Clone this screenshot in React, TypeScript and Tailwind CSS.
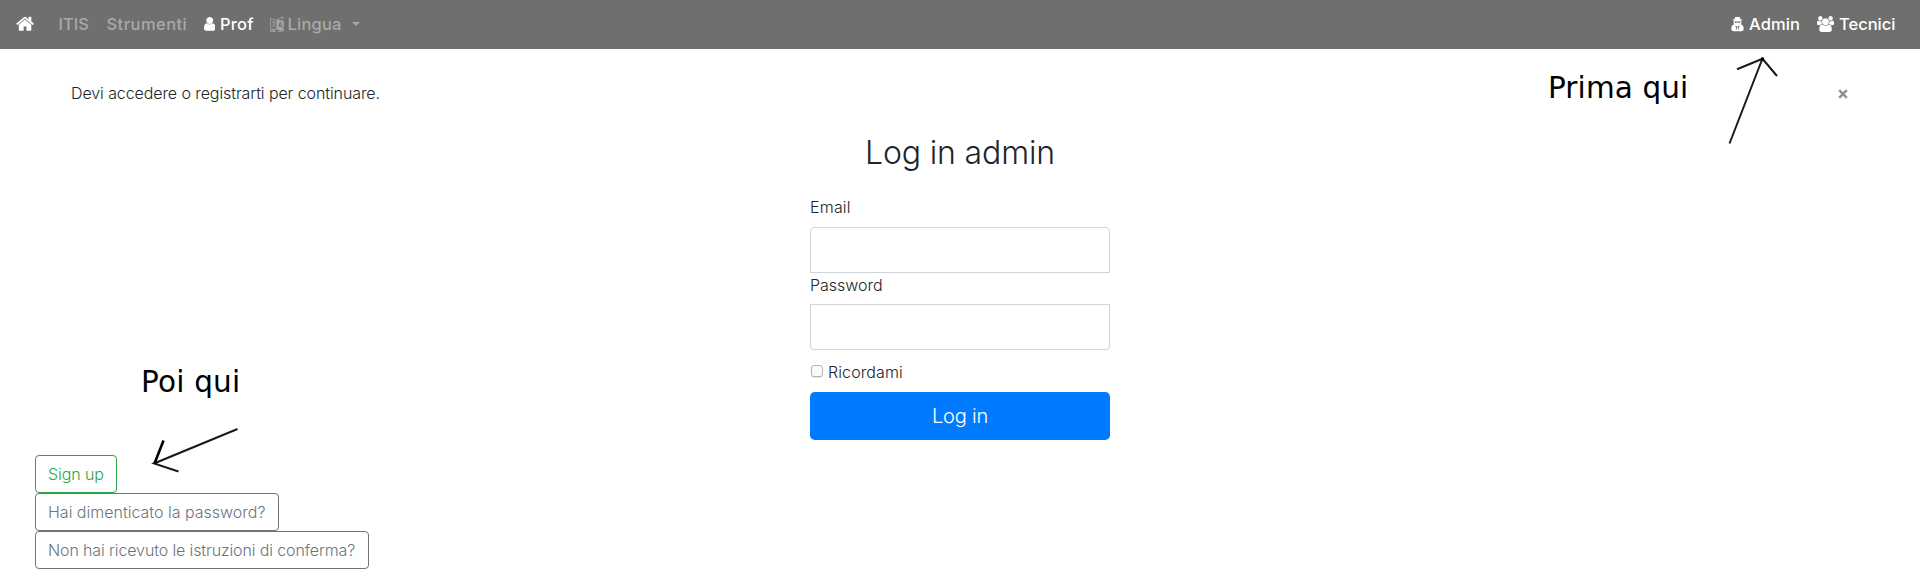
import type { ReactNode } from "react";

const HOME =
  "M1408 992v480q0 26-19 45t-45 19h-384v-384h-256v384h-384q-26 0-45-19t-19-45v-480q0-1 .5-3t.5-3l575-474 575 474q1 2 1 6zm223-69l-62 74q-8 9-21 11h-3q-13 0-21-7l-692-577-692 577q-12 8-24 7-13-2-21-11l-62-74q-8-10-7-23.5t11-21.5l719-599q32-26 76-26t76 26l244 204v-195q0-14 9-23t23-9h192q14 0 23 9t9 23v408l219 182q10 8 11 21.5t-7 23.5z";
const USER =
  "M1536 1399q0 109-62.5 187t-150.5 78h-854q-88 0-150.5-78t-62.5-187q0-85 8.5-160.5t31.5-152 58.5-131 94-89 134.5-34.5q131 128 313 128t313-128q76 0 134.5 34.5t94 89 58.5 131 31.5 152 8.5 160.5zm-256-887q0 159-112.5 271.5t-271.5 112.5-271.5-112.5-112.5-271.5 112.5-271.5 271.5-112.5 271.5 112.5 112.5 271.5z";
const GROUP =
  "M593 896q-162 5-265 128h-134q-82 0-138-40.5t-56-118.5q0-353 124-353 6 0 43.5 21t97.5 42.5 119 21.5q67 0 133-23-5 37-5 66 0 139 81 256zm1071 637q0 120-73 189.5t-194 69.5h-874q-121 0-194-69.5t-73-189.5q0-53 3.5-103.5t14-109 26.5-108.5 43-97.5 62-81 85.5-53.5 111.5-20q10 0 43 21.5t73 48 107 48 135 21.5 135-21.5 107-48 73-48 43-21.5q61 0 111.5 20t85.5 53.5 62 81 43 97.5 26.5 108.5 14 109 3.5 103.5zm-1024-1277q0 106-75 181t-181 75-181-75-75-181 75-181 181-75 181 75 75 181zm704 384q0 159-112.5 271.5t-271.5 112.5-271.5-112.5-112.5-271.5 112.5-271.5 271.5-112.5 271.5 112.5 112.5 271.5zm576 225q0 78-56 118.5t-138 40.5h-134q-103-123-265-128 81-117 81-256 0-29-5-66 66 23 133 23 59 0 119-21.5t97.5-42.5 43.5-21q124 0 124 353zm-128-609q0 106-75 181t-181 75-181-75-75-181 75-181 181-75 181 75 75 181z";

function LanguageIcon() {
  return (
    <svg viewBox="0 0 14 16" className="h-4 w-3.5" fill="none" stroke="currentColor">
      <path d="M.7 2.500 6.800 4.200v9.300L.7 15.200zM6.800 4.200 12.800.6v3M.7 15.200l5 .4M8 15.600l5-.6" strokeWidth=".8" />
      <path d="M7 3.400 13.700 5v10.300L7 13.400z" fill="currentColor" stroke="none" />
      <path d="M8.500 11.200 10.300 6l1.900 6.200M9 9.700l2.600.7" stroke="#6f6f6f" strokeWidth="1" />
      <path d="m2 5.800 3.400.5M3.700 4.500v1.700M4.800 6.500C4.400 9 3.200 10.500 1.900 11.300M2.400 7.800l2.900 2.700M2 13.500l3-.7" strokeWidth=".8" />
    </svg>
  );
}

function SecretIcon() {
  return (
    <svg viewBox="0 0 13 16" className="h-4 w-[13px]" fill="currentColor">
      <path d="M3.700 3.100C3.900 1.500 4.300.7 5 .7c.5 0 1 .4 1.500.4S7.500.7 8 .7c.7 0 1.100.8 1.300 2.400 1.200.2 1.900.5 1.900.9 0 .6-2.100 1-4.700 1s-4.700-.4-4.700-1c0-.4.700-.7 1.900-.9z" />
      <path
        fillRule="evenodd"
        d="M2.700 5.200c1 .3 6.600.3 7.600 0 .3 1.100.1 2.300-.5 3.100C12 9 12.700 10.500 12.700 12.800c0 1.600-1 2.400-2.400 2.400H2.700c-1.400 0-2.400-.8-2.400-2.400C.3 10.500 1 9 3.200 8.300c-.6-.8-.8-2-.5-3.100zM3.600 5.900c.1.800.6 1 1.300 1s1.100-.3 1.300-.7h.6c.2.4.6.7 1.300.7s1.200-.2 1.300-1zM4.400 9.600l1.300 4.600.5-3.200-.5-.9zM8.600 9.600l-1.300.5-.5.9.5 3.200z"
      />
    </svg>
  );
}

function Outline({ className, children }: { className: string; children: ReactNode }) {
  return (
    <a className={"flex h-[38px] items-center rounded border pl-3 whitespace-nowrap " + className}>
      <span>{children}</span>
    </a>
  );
}

export default function App() {
  return (
    <div className="relative h-[579px] overflow-hidden bg-white font-['Inter','Liberation_Sans',sans-serif] text-base font-light text-[#212529]">
      <nav className="flex h-[49px] items-center bg-[#6f6f6f] pr-6 pb-px pl-4 text-[16.5px] leading-6 font-medium text-[#a9a9a9]">
        <svg viewBox="0 0 1792 1792" className="h-[19.500px] w-[19.500px] text-white" fill="currentColor">
          <path d={HOME} />
        </svg>
        <a className="ml-[23px] w-12">ITIS</a>
        <a className="w-[97px] tracking-[0.45px]">Strumenti</a>
        <a className="flex w-[66px] items-center text-white">
          <svg viewBox="256 128 1280 1664" className="mr-[5px] h-[15px] w-[11.500px]" fill="currentColor">
            <path d={USER} />
          </svg>
          <span className="tracking-[0.2px]">Prof</span>
        </a>
        <a className="flex items-center">
          <LanguageIcon />
          <span className="ml-1 w-[55px] tracking-[0.2px]">Lingua</span>
          <svg viewBox="0 0 8 4" className="ml-[9px] h-1 w-2" fill="currentColor">
            <path d="M0 0h8L4 4z" />
          </svg>
        </a>
        <div className="ml-auto flex text-white">
          <a className="flex w-[86px] items-center">
            <SecretIcon />
            <span className="ml-[5px] tracking-[0.1px]">Admin</span>
          </a>
          <a className="flex items-center">
            <svg viewBox="0 0 1920 1792" className="h-4 w-[17px]" fill="currentColor">
              <path d={GROUP} />
            </svg>
            <span className="ml-[5px] w-[57px] whitespace-nowrap">Tecnici</span>
          </a>
        </div>
      </nav>

      <div className="flex h-[88px] items-center justify-between pr-[72px] pl-[71px]">
        <span className="tracking-[-0.09px]">Devi accedere o registrarti per continuare.</span>
        <svg viewBox="0 0 10 10" className="mt-px h-2.5 w-2.5" stroke="#8a929a" strokeWidth="2.500">
          <path d="m1.200 1.200 7.600 7.600m0-7.600L1.200 8.800" />
        </svg>
      </div>

      <form className="mx-auto flex w-[300px] flex-col">
        <h1 className="h-[58px] text-center text-[32px] leading-[32px] tracking-[-0.15px] whitespace-nowrap">Log in admin</h1>
        <label className="h-8 leading-6 tracking-[0.2px]">Email</label>
        <input className="h-[46px] rounded-t border border-[#ced4da] px-2.5" type="email" />
        <label className="h-[31px] leading-6">Password</label>
        <input className="h-[46px] rounded-b border border-[#ced4da] px-2.5" type="password" />
        <label className="flex h-[42px] items-center">
          <span className="mr-[5px] mb-px ml-px h-3 w-3 rounded-[3px] border border-[#b5b5b5] bg-[#fafafa] shadow-[0_1px_1px_#e5e5e5]" />
          <span className="mt-[2px] tracking-[0.1px]">Ricordami</span>
        </label>
        <button type="button" className="h-12 rounded-[4.800px] bg-[#007bff] text-xl leading-[30px] tracking-[-0.2px] text-white">
          Log in
        </button>
      </form>

      <div className="mt-[15px] flex flex-col items-start pl-[35px] text-[#6c757d]">
        <Outline className="w-[82px] border-[#28a745] tracking-[-0.1px] text-[#28a745]">Sign up</Outline>
        <Outline className="w-[244px] border-[#6c757d]">Hai dimenticato la password?</Outline>
        <Outline className="w-[334px] border-[#6c757d] tracking-[-0.12px]">Non hai ricevuto le istruzioni di conferma?</Outline>
      </div>

      <span className="absolute top-[71px] left-[1548px] font-['DejaVu_Sans',sans-serif] text-[29.500px] leading-[34px] font-normal tracking-[0.1px] whitespace-nowrap text-black">
        Prima qui
      </span>
      <span className="absolute top-[365px] left-[141px] font-['DejaVu_Sans',sans-serif] text-[29.500px] leading-[34px] font-normal tracking-[0.2px] whitespace-nowrap text-black">
        Poi qui
      </span>
      <svg viewBox="0 0 60 96" className="absolute top-[52px] left-[1722px] h-24 w-[60px]" fill="none" stroke="#1a1a1a" strokeWidth="2">
        <path d="M7.500 91.500 40.500 6.500M15 17.200l25.500-10.400L55 24" />
        <path d="M39 5.500h3v3h-3z" fill="#000" stroke="none" />
      </svg>
      <svg viewBox="0 0 96 52" className="absolute top-[424px] left-[148px] h-[52px] w-24" fill="none" stroke="#1a1a1a" strokeWidth="2">
        <path d="M89.500 5 6 39.500l24.500 8" />
        <path d="M15.500 16.500 6.500 39.500" stroke="#000" strokeWidth="2.600" />
      </svg>
    </div>
  );
}
